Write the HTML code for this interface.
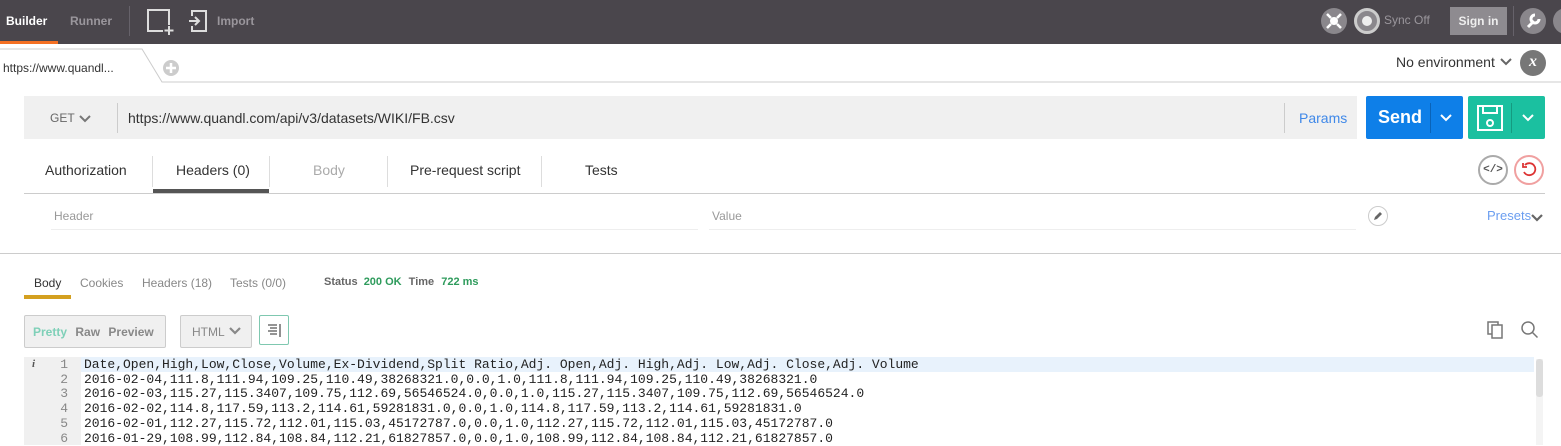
<!DOCTYPE html>
<html><head><meta charset="utf-8"><style>
*{box-sizing:border-box;margin:0;padding:0}
body{width:1561px;height:445px;overflow:hidden;background:#fff;font-family:"Liberation Sans",sans-serif;position:relative;color:#333}
.a{position:absolute}
.top{left:0;top:0;width:1561px;height:44px;background:#4a464c}
.t{font-size:12px;font-weight:bold}
.mono{font-family:"Liberation Mono",monospace;font-size:13px;line-height:14.7px;white-space:pre;color:#222}
</style></head><body>
<div class="a top"></div>
<div class="a t" style="left:6px;top:14px;color:#fff">Builder</div>
<div class="a" style="left:0;top:41px;width:58px;height:3px;background:#f47023"></div>
<div class="a t" style="left:70px;top:14px;color:#9a969c">Runner</div>
<div class="a" style="left:129px;top:6px;width:1px;height:30px;background:#66626a"></div>
<svg class="a" style="left:146px;top:8px" width="32" height="28"><path d="M17 23H2V2h21v15" fill="none" stroke="#ddd" stroke-width="2"/><path d="M23 18v9M18.5 22.5h9" stroke="#ddd" stroke-width="2"/></svg>
<svg class="a" style="left:188px;top:8px" width="22" height="26"><path d="M4 8V3h14v20H4v-5M1 13h10M7 9l4 4-4 4" fill="none" stroke="#ddd" stroke-width="2"/></svg>
<div class="a t" style="left:217px;top:14px;color:#9a969c">Import</div>
<div class="a" style="left:1321px;top:8px;width:26px;height:26px;border-radius:50%;background:#8a878c"></div>
<svg class="a" style="left:1321px;top:8px" width="26" height="26"><circle cx="13" cy="13" r="4" fill="#fff"/><path d="M6 6l4 4M20 6l-4 4M6 20l4-4M20 20l-4-4" stroke="#fff" stroke-width="2.5"/></svg>
<div class="a" style="left:1354px;top:8px;width:26px;height:26px;border-radius:50%;background:#8a878c;border:3px solid #ccc"></div>
<div class="a" style="left:1362px;top:16px;width:10px;height:10px;border-radius:50%;background:#eee"></div>
<div class="a" style="left:1384px;top:13px;font-size:12px;color:#9a969c">Sync Off</div>
<div class="a" style="left:1450px;top:7px;width:57px;height:28px;background:#8e8b90;color:#eee;font-size:12px;font-weight:bold;text-align:center;line-height:28px">Sign in</div>
<div class="a" style="left:1513px;top:6px;width:1px;height:30px;background:#66626a"></div>
<div class="a" style="left:1520px;top:8px;width:26px;height:26px;border-radius:50%;background:#8a878c"></div>
<svg class="a" style="left:1520px;top:8px" width="26" height="26"><path d="M8 19l6-6M15 7a4 4 0 1 0 4 4" stroke="#fff" stroke-width="3" fill="none"/></svg>
<div class="a" style="left:1553px;top:8px;width:26px;height:26px;border-radius:50%;background:#8a878c"></div>
<!-- tab row -->
<svg class="a" style="left:0;top:44px" width="1561" height="40"><path d="M0 5H142L162 38H1561" fill="none" stroke="#ccc"/><circle cx="171" cy="24" r="8" fill="#ccc"/><path d="M171 19v10M166 24h10" stroke="#fff" stroke-width="2.5"/></svg>
<div class="a" style="left:3px;top:61px;font-size:12px;color:#333">https://www.quandl...</div>
<div class="a" style="left:1396px;top:54px;font-size:14px;color:#333">No environment</div>
<svg class="a" style="left:1500px;top:58px" width="12" height="8"><path d="M1 1l5 5 5-5" fill="none" stroke="#666" stroke-width="2"/></svg>
<div class="a" style="left:1520px;top:50px;width:26px;height:26px;border-radius:50%;background:#777;color:#fff;font:italic bold 16px 'Liberation Serif',serif;text-align:center;line-height:24px">x</div>
<!-- url bar -->
<div class="a" style="left:24px;top:96px;width:1333px;height:43px;background:#f0f0f0"></div>
<div class="a" style="left:50px;top:111px;font-size:12px;color:#666">GET</div>
<svg class="a" style="left:79px;top:115px" width="12" height="8"><path d="M1 1l5 5 5-5" fill="none" stroke="#777" stroke-width="2"/></svg>
<div class="a" style="left:117px;top:103px;width:1px;height:30px;background:#ccc"></div>
<div class="a" style="left:128px;top:110px;font-size:14px;color:#333">https://www.quandl.com/api/v3/datasets/WIKI/FB.csv</div>
<div class="a" style="left:1284px;top:103px;width:1px;height:30px;background:#ccc"></div>
<div class="a" style="left:1299px;top:110px;font-size:14px;color:#3f88e8">Params</div>
<div class="a" style="left:1366px;top:96px;width:97px;height:43px;background:#0e7fe8;border-radius:2px"></div>
<div class="a" style="left:1378px;top:107px;font-size:18px;font-weight:bold;color:#fff">Send</div>
<div class="a" style="left:1430px;top:103px;width:1px;height:30px;background:#0a63b8"></div>
<svg class="a" style="left:1440px;top:114px" width="12" height="8"><path d="M1 1l5 5 5-5" fill="none" stroke="#fff" stroke-width="2"/></svg>
<div class="a" style="left:1468px;top:96px;width:77px;height:43px;background:#1bc0a0;border-radius:2px"></div>
<svg class="a" style="left:1476px;top:104px" width="28" height="28"><rect x="2" y="2" width="24" height="24" fill="none" stroke="#fff" stroke-width="2"/><path d="M7 2v7h14V2" fill="none" stroke="#fff" stroke-width="2"/><circle cx="14" cy="19" r="3" fill="none" stroke="#fff" stroke-width="2"/></svg>
<div class="a" style="left:1511px;top:103px;width:1px;height:30px;background:#159a80"></div>
<svg class="a" style="left:1522px;top:114px" width="12" height="8"><path d="M1 1l5 5 5-5" fill="none" stroke="#fff" stroke-width="2"/></svg>
<!-- request tabs -->
<div class="a" style="left:45px;top:162px;font-size:14px">Authorization</div>
<div class="a" style="left:152px;top:156px;width:1px;height:31px;background:#ddd"></div>
<div class="a" style="left:176px;top:162px;font-size:14px">Headers (0)</div>
<div class="a" style="left:153px;top:189px;width:116px;height:4px;background:#555"></div>
<div class="a" style="left:269px;top:156px;width:1px;height:31px;background:#ddd"></div>
<div class="a" style="left:313px;top:162px;font-size:14px;color:#aaa">Body</div>
<div class="a" style="left:387px;top:156px;width:1px;height:31px;background:#ddd"></div>
<div class="a" style="left:410px;top:162px;font-size:14px">Pre-request script</div>
<div class="a" style="left:541px;top:156px;width:1px;height:31px;background:#ddd"></div>
<div class="a" style="left:585px;top:162px;font-size:14px">Tests</div>
<div class="a" style="left:24px;top:193px;width:1521px;height:1px;background:#ccc"></div>
<div class="a" style="left:1478px;top:155px;width:30px;height:30px;border-radius:50%;border:2px solid #aaa;font:bold 11px 'Liberation Mono',monospace;color:#555;text-align:center;line-height:26px">&lt;/&gt;</div>
<div class="a" style="left:1514px;top:155px;width:30px;height:30px;border-radius:50%;border:2px solid #f0a0a0"></div>
<svg class="a" style="left:1519px;top:160px" width="20" height="20"><path d="M6 5a6 6 0 1 1-1 7M4 3v4h4" fill="none" stroke="#d33" stroke-width="1.8"/></svg>
<div class="a" style="left:54px;top:209px;font-size:12px;color:#999">Header</div>
<div class="a" style="left:51px;top:229px;width:647px;height:1px;background:#eee"></div>
<div class="a" style="left:712px;top:209px;font-size:12px;color:#999">Value</div>
<div class="a" style="left:709px;top:229px;width:647px;height:1px;background:#eee"></div>
<div class="a" style="left:1368px;top:206px;width:20px;height:20px;border-radius:50%;border:1px solid #ccc"></div>
<svg class="a" style="left:1372px;top:210px" width="12" height="12"><path d="M2 10l1-3 5-5 2 2-5 5z" fill="#666"/></svg>
<div class="a" style="left:1487px;top:208px;font-size:13px;color:#6b9ef0">Presets</div>
<svg class="a" style="left:1531px;top:214px" width="12" height="8"><path d="M1 1l5 5 5-5" fill="none" stroke="#666" stroke-width="2.2"/></svg>
<div class="a" style="left:0;top:253px;width:1561px;height:1px;background:#ccc"></div>
<!-- response -->
<div class="a" style="left:34px;top:276px;font-size:12px;color:#333">Body</div>
<div class="a" style="left:24px;top:295px;width:47px;height:4px;background:#d4a020"></div>
<div class="a" style="left:80px;top:276px;font-size:12px;color:#888">Cookies</div>
<div class="a" style="left:142px;top:276px;font-size:12px;color:#888">Headers (18)</div>
<div class="a" style="left:230px;top:276px;font-size:12px;color:#888">Tests (0/0)</div>
<div class="a" style="left:324px;top:276px;font-size:11px;font-weight:bold;color:#666">Status <span style="color:#2e9b5c;margin-left:3px">200 OK</span> <span style="margin-left:4px">Time</span> <span style="color:#2e9b5c;margin-left:4px">722 ms</span></div>
<div class="a" style="left:24px;top:315px;width:142px;height:33px;background:#f0f0f0;border:1px solid #ccc;border-radius:2px"></div>
<div class="a" style="left:33px;top:325px;font-size:12px;font-weight:bold;color:#7fd0b8">Pretty <span style="color:#888;margin-left:5px">Raw</span> <span style="color:#888;margin-left:5px">Preview</span></div>
<div class="a" style="left:180px;top:315px;width:72px;height:33px;background:#f0f0f0;border:1px solid #ccc;border-radius:2px;font-size:12px;color:#888;padding:9px 0 0 11px">HTML</div>
<svg class="a" style="left:229px;top:327px" width="12" height="8"><path d="M1 1l5 5 5-5" fill="none" stroke="#888" stroke-width="2.2"/></svg>
<div class="a" style="left:259px;top:315px;width:30px;height:30px;border:1px solid #7fc8b0;border-radius:2px"></div>
<svg class="a" style="left:266px;top:322px" width="16" height="16"><path d="M2 3h9M4 6h7M2 9h9M4 12h7M14 2v13" stroke="#555" stroke-width="1.3"/></svg>
<svg class="a" style="left:1486px;top:320px" width="20" height="20"><rect x="2" y="2" width="10" height="12" fill="none" stroke="#777" stroke-width="1.5"/><rect x="6" y="5" width="10" height="13" fill="#fff" stroke="#777" stroke-width="1.5"/></svg>
<svg class="a" style="left:1520px;top:320px" width="20" height="20"><circle cx="8" cy="8" r="6" fill="none" stroke="#777" stroke-width="1.5"/><path d="M12.5 12.5l5 5" stroke="#777" stroke-width="1.5"/></svg>
<div class="a" style="left:24px;top:357px;width:57px;height:88px;background:#f0f0f0"></div>
<div class="a" style="left:81px;top:357px;width:1453px;height:15px;background:#e8f2fc"></div>
<div class="a" style="left:1536px;top:359px;width:7px;height:86px;background:#f4f4f4"></div>
<div class="a" style="left:1536px;top:359px;width:7px;height:38px;background:#ddd;border-radius:3px"></div>
<div class="a" style="left:32px;top:358px;font:italic bold 11px 'Liberation Serif',serif;color:#555">i</div>
<div class="a mono" style="left:50px;top:358px;color:#888;text-align:right;width:18px">1
2
3
4
5
6</div>
<div class="a mono" style="left:84px;top:358px">Date,Open,High,Low,Close,Volume,Ex-Dividend,Split Ratio,Adj. Open,Adj. High,Adj. Low,Adj. Close,Adj. Volume
2016-02-04,111.8,111.94,109.25,110.49,38268321.0,0.0,1.0,111.8,111.94,109.25,110.49,38268321.0
2016-02-03,115.27,115.3407,109.75,112.69,56546524.0,0.0,1.0,115.27,115.3407,109.75,112.69,56546524.0
2016-02-02,114.8,117.59,113.2,114.61,59281831.0,0.0,1.0,114.8,117.59,113.2,114.61,59281831.0
2016-02-01,112.27,115.72,112.01,115.03,45172787.0,0.0,1.0,112.27,115.72,112.01,115.03,45172787.0
2016-01-29,108.99,112.84,108.84,112.21,61827857.0,0.0,1.0,108.99,112.84,108.84,112.21,61827857.0</div>
</body></html>
